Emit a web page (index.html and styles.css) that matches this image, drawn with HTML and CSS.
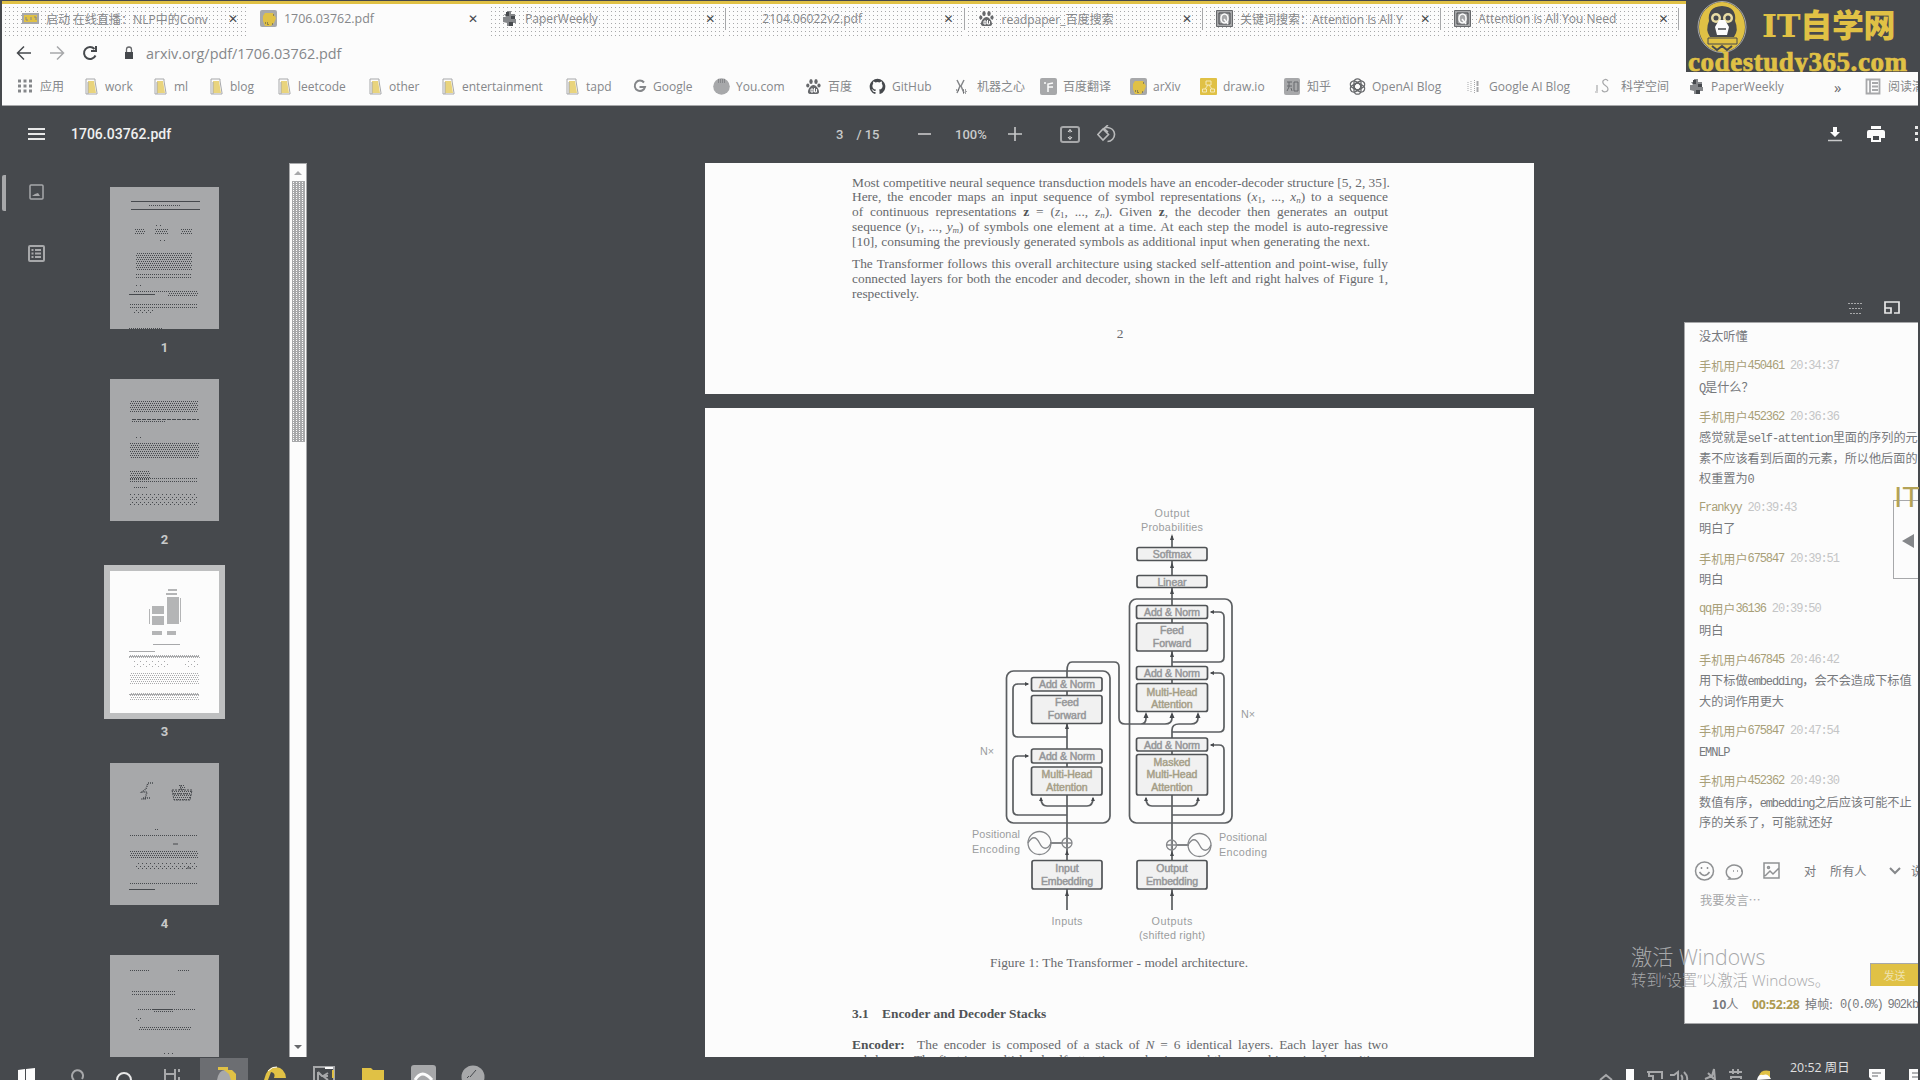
FILE: index.html
```html
<!DOCTYPE html>
<html lang="zh-CN">
<head>
<meta charset="utf-8">
<title>1706.03762.pdf</title>
<link rel="stylesheet" href="styles.css">
</head>
<body>
<svg class="defs" width="0" height="0">
  <defs>
    <pattern id="dense" width="4" height="4" patternUnits="userSpaceOnUse"><path class="dot" d="M0 0h1v1H0zM2 0h1v1H2zM1 2h1v1H1zM3 2h1v1H3z"/></pattern>
    <pattern id="loose" width="4" height="5" patternUnits="userSpaceOnUse"><path class="dot" d="M0 0h1v1H0zM2 3h1v1H2z"/></pattern>
    <pattern id="row" width="2" height="3" patternUnits="userSpaceOnUse"><path class="dot" d="M0 0h1v1H0z"/></pattern>
    <pattern id="speck" width="6" height="5" patternUnits="userSpaceOnUse"><path fill="#a7a8aa" d="M0 0h1v1H0zM3 3h1v1H3z"/></pattern>
    <marker id="arrow" viewBox="0 0 6 6" refX="4" refY="3" markerWidth="5" markerHeight="5" markerUnits="userSpaceOnUse" orient="auto"><path d="M0 .5 5.5 3 0 5.5z" fill="#46494d"/></marker>
    <symbol id="folder" viewBox="0 0 15 17"><path d="M2 16V1h9v2l2 12v1z" fill="#fcfcfc" stroke="#a7a8aa"/><path d="M4 3h6l2 12H4z" fill="#e9d47d"/><path d="M4 16V4" stroke="#a7a8aa"/></symbol>
    <symbol id="paw" viewBox="0 0 17 17"><g fill="#67696c"><ellipse cx="6" cy="3.5" rx="1.7" ry="2.5"/><ellipse cx="11" cy="3.5" rx="1.7" ry="2.5"/><ellipse cx="2.8" cy="7.5" rx="1.6" ry="2"/><ellipse cx="14" cy="7.5" rx="1.6" ry="2"/><path d="M8.5 7c3 0 6 5 5.5 7.500-.5 2-3 1.500-5.500 1.500s-5 .5-5.500-1.500C2.500 12 5.500 7 8.500 7z"/></g><path d="M6 11h2v3H6zM9.500 10v4h2v-3" fill="none" stroke="#fcfcfc"/></symbol>
    <symbol id="paper" viewBox="0 0 17 17"><path d="M6 1h4v3h4v4l-2 1h3v4h-3l-2 3H6v-3l-4-1V7h3L3 4h3z" fill="#85878a"/><path d="M5 2h3v4H5zM10 6h4v3h-4zM8 12h4v4H8z" fill="#46494d"/></symbol>
    <symbol id="reader" viewBox="0 0 17 17"><path d="M.5.5h16v16H.5z" fill="#a7a8aa" stroke="#67696c"/><path d="M3 3h11v11H3z" fill="none" stroke="#46494d"/><ellipse cx="8.500" cy="8.500" rx="3.500" ry="4.500" fill="none" stroke="#fcfcfc" stroke-width="1.500"/><path d="m8 9 4 5" stroke="#fcfcfc" stroke-width="1.500"/></symbol>
    <symbol id="arxiv" viewBox="0 0 17 17"><rect width="17" height="17" rx="2" fill="#a7a8aa"/><path d="M5 3h8l3 5-2 5-3 3H5l-2-5V6z" fill="#e0c145"/><path d="M5 13h3v2M13 5h2M12 14h2" stroke="#46494d" fill="none" stroke-dasharray="1 1"/></symbol>
  </defs>
</svg>

<div class="window">
  <header class="browser">
    <nav class="tabs">
      <div class="tab first"><svg class="fav" viewBox="0 0 17 17"><path d="M0 3h17v11H0z" fill="#a7a8aa"/><path d="M2 5h13v7H2z" fill="#e0c145"/><path d="M4 7v3h2m3-3v3m3-3h2v3" fill="none" stroke="#85878a"/></svg><span>启动 在线直播：NLP中的Conv</span><i>✕</i></div>
      <div class="tab active"><svg class="fav"><use href="#arxiv"/></svg><span>1706.03762.pdf</span><i>✕</i></div>
      <div class="tab"><svg class="fav"><use href="#paper"/></svg><span>PaperWeekly</span><i>✕</i></div>
      <div class="tab plain"><span>2104.06022v2.pdf</span><i>✕</i></div>
      <div class="tab"><svg class="fav"><use href="#paw"/></svg><span>readpaper_百度搜索</span><i>✕</i></div>
      <div class="tab"><svg class="fav"><use href="#reader"/></svg><span>关键词搜索：Attention Is All Y</span><i>✕</i></div>
      <div class="tab"><svg class="fav"><use href="#reader"/></svg><span>Attention is All You Need</span><i>✕</i></div>
    </nav>
    <div class="address">
      <svg width="16" height="16" viewBox="0 0 16 16" class="ink"><path d="M15 8H2m6-6.500L1.500 8 8 14.500"/></svg>
      <svg width="16" height="16" viewBox="0 0 16 16" class="soft"><path d="M1 8h13M8 1.500 14.500 8 8 14.500"/></svg>
      <svg width="16" height="16" viewBox="0 0 16 16" class="ink thick"><path d="M13.500 10.500A6 6 0 1 1 12.500 4M14 1v5H9"/></svg>
      <svg class="lock" width="10" height="14" viewBox="0 0 10 14"><path d="M1 6h8v7H1z" fill="#46494d"/><path d="M2.500 6V3.500a2.500 2.500 0 0 1 5 0V6" fill="none" stroke="#67696c" stroke-width="1.300"/></svg>
      <span>arxiv.org/pdf/1706.03762.pdf</span>
    </div>
    <nav class="bookmarks">
      <a class="wide"><svg viewBox="0 0 17 17"><path d="M1 3h14M1 8h14M1 13h14" stroke="#85878a" stroke-width="3" stroke-dasharray="3 2.500"/></svg>应用</a>
      <a><svg><use href="#folder"/></svg>work</a>
      <a><svg><use href="#folder"/></svg>ml</a>
      <a><svg><use href="#folder"/></svg>blog</a>
      <a><svg><use href="#folder"/></svg>leetcode</a>
      <a><svg><use href="#folder"/></svg>other</a>
      <a><svg><use href="#folder"/></svg>entertainment</a>
      <a><svg><use href="#folder"/></svg>tapd</a>
      <a><svg viewBox="0 0 15 17"><path d="M12 4.500a5.200 5.200 0 1 0 1 4.500H7.500" fill="none" stroke="#85878a" stroke-width="2"/></svg>Google</a>
      <a class="wide"><svg viewBox="0 0 17 17"><circle cx="8.500" cy="8.500" r="8.300" fill="#a7a8aa"/><path d="M5 2h8M5 4h8" stroke="#67696c" stroke-dasharray="1 1"/></svg>You.com</a>
      <a class="wide"><svg><use href="#paw"/></svg>百度</a>
      <a class="wide"><svg viewBox="0 0 17 17"><path fill="#46494d" d="M8.500.8A7.800 7.800 0 0 0 6 16c.4 0 .5-.2.500-.4V14c-2.200.5-2.700-1-2.700-1-.4-.9-.9-1.200-.9-1.200-.7-.5.1-.5.1-.5.800.1 1.200.8 1.200.8.700 1.200 1.900.9 2.300.7.100-.5.300-.9.500-1.100-1.700-.2-3.600-.9-3.600-3.900 0-.9.300-1.500.8-2.100-.1-.2-.3-1 .1-2.100 0 0 .7-.2 2.200.8a7.500 7.500 0 0 1 4 0c1.500-1 2.200-.8 2.200-.8.400 1.100.2 1.900.1 2.100.5.600.8 1.200.8 2.100 0 3-1.900 3.700-3.600 3.900.3.300.5.700.5 1.400v2.500c0 .2.100.5.500.4A7.800 7.800 0 0 0 8.500.8z"/></svg>GitHub</a>
      <a class="wide"><svg viewBox="0 0 17 17"><path d="m3 2 3 6-3 7M10 2 7 8l3 7" fill="none" stroke="#85878a" stroke-width="1.500"/><path d="M2 12h3m4 0h3v3H9" stroke="#46494d" stroke-dasharray="1 1" fill="none"/></svg>机器之心</a>
      <a class="wide"><svg viewBox="0 0 17 17"><rect width="17" height="17" rx="2" fill="#a7a8aa"/><path d="M8 14V6l5-1M4 5h2M8 9h5" stroke="#fcfcfc" stroke-width="1.500" fill="none"/></svg>百度翻译</a>
      <a class="wide"><svg><use href="#arxiv"/></svg>arXiv</a>
      <a class="wide"><svg viewBox="0 0 17 17"><rect width="17" height="17" rx="1" fill="#e0c145"/><path d="M6 3h5v4H6zM2.500 11h4v3h-4zM10.500 11h4v3h-4zM8 7l-3 4m4-4 3 4" fill="none" stroke="#f5e9b8" stroke-width="1"/></svg>draw.io</a>
      <a class="wide"><svg viewBox="0 0 17 17"><rect width="16" height="17" rx="2" fill="#a7a8aa"/><path d="M3 4h5M3 8h5M5 4v5l-2 4m4-3 1 3m2-9h4v9h-4z" fill="none" stroke="#67696c"/></svg>知乎</a>
      <a class="wide"><svg viewBox="0 0 17 17"><g fill="none" stroke="#67696c" stroke-width="1.300"><rect x="5" y=".8" width="7" height="11" rx="3.500"/><rect x="5" y=".8" width="7" height="11" rx="3.500" transform="rotate(60 8.500 8.500)"/><rect x="5" y=".8" width="7" height="11" rx="3.500" transform="rotate(120 8.500 8.500)"/><rect x="5" y=".8" width="7" height="11" rx="3.500" transform="rotate(180 8.500 8.500)"/><rect x="5" y=".8" width="7" height="11" rx="3.500" transform="rotate(240 8.500 8.500)"/><rect x="5" y=".8" width="7" height="11" rx="3.500" transform="rotate(300 8.500 8.500)"/></g></svg>OpenAI Blog</a>
      <a class="wide"><svg viewBox="0 0 17 17"><path d="M2 4v10M5 3v11M8.500 2v13" stroke="#a7a8aa" stroke-dasharray="1 1"/><path d="M11.500 3v12" stroke="#a7a8aa" stroke-width="2" stroke-dasharray="5 1"/></svg>Google AI Blog</a>
      <a class="wide extra"><svg viewBox="0 0 17 17"><path d="M14 3C12 0 8 2 9 5s5 3 5 6-5 4-6 1M3 7v6M1 14h3" fill="none" stroke="#a7a8aa" stroke-width="1.200"/></svg>科学空间</a>
      <a class="wide"><svg><use href="#paper"/></svg>PaperWeekly</a>
      <a class="more">»</a>
      <a class="wide"><svg viewBox="0 0 17 17"><path d="M1.500 1.500h13v14h-13zM5 2v13M7 5h6M7 8.500h6M7 12h6" fill="none" stroke="#a7a8aa" stroke-width="1.800"/></svg>阅读清单</a>
    </nav>
  </header>

  <div class="toolbar">
    <svg class="menu" width="17" height="14" viewBox="0 0 17 14"><path d="M0 2h17M0 7h17M0 12h17" stroke="#e8e8e8" stroke-width="2"/></svg>
    <b class="docname">1706.03762.pdf</b>
    <div class="pager"><span>3</span><span>/ 15</span></div>
    <svg class="minus" width="14" height="14" viewBox="0 0 14 14"><path d="M0 7h13" stroke="#c8c9ca" stroke-width="1.600"/></svg>
    <span class="zoom">100%</span>
    <svg class="plus" width="14" height="14" viewBox="0 0 14 14"><path d="M0 7h14M7 0v14" stroke="#c8c9ca" stroke-width="1.600"/></svg>
    <svg class="fit" width="20" height="17" viewBox="0 0 20 17"><rect x="1" y="1" width="18" height="15" rx="2" fill="none" stroke="#a7a8aa" stroke-width="2"/><path d="M10 3.500v3M10 10v3M8 6l2-2.500L12 6M8 11l2 2.500 2-2.500" fill="none" stroke="#dedede"/></svg>
    <svg class="rotate" width="19" height="18" viewBox="0 0 19 18"><path d="m6 4 5.500 5.500L6 15 .8 9.500zM6 4c4-3 11-1 11.500 5 .3 4-3 7.500-7 7.500M11 0 7 3.500 11 7" fill="none" stroke="#b9babb" stroke-width="1.600"/></svg>
    <svg class="download" width="14" height="16" viewBox="0 0 14 16"><path d="M5 1h4v5h3l-5 5-5-5h3z" fill="#fcfcfc"/><path d="M0 14.500h14" stroke="#c8c9ca" stroke-width="1.500"/></svg>
    <svg class="print" width="18" height="16" viewBox="0 0 18 16"><path d="M4 0h10v3H4zM2 4h14a2 2 0 0 1 2 2v6h-4v4H4v-4H0V6a2 2 0 0 1 2-2z" fill="#fcfcfc"/><path d="M6 10h6v4H6z" fill="#46494d"/></svg>
    <svg class="dots" width="4" height="16" viewBox="0 0 4 16"><path d="M1 0h3v3H1zM1 6h3v3H1zM1 12h3v3H1z" fill="#e8e8e8"/></svg>
  </div>

  <main class="viewer">
    <aside class="modes">
      <div class="mode current"><svg width="17" height="17" viewBox="0 0 17 17"><rect x="2" y="1" width="13" height="14" rx="1" fill="none" stroke="#a7a8aa" stroke-width="1.500"/><path d="m4 12 3-2 3-1 2 3z" fill="#a7a8aa"/></svg></div>
      <div class="mode"><svg width="17" height="17" viewBox="0 0 17 17"><rect x="1" y="1" width="15" height="15" rx="1" fill="none" stroke="#a7a8aa" stroke-width="2"/><path d="M3.500 5h2M3.500 8.500h2M3.500 12h2M7 5h6M7 8.500h6M7 12h6" stroke="#a7a8aa" stroke-width="1.800"/></svg></div>
    </aside>
    <section class="thumbs">
      <figure><svg class="page" viewBox="0 0 109 142"><path class="rule" d="M21 14.500h69M21 22.500h69"/><path fill="url(#dense)" d="M38 18h33v2H38zM25 42h10v5H25zM45 42h13v5H45zM71 42h11v5H71zM23 103h35v3H23zM58 103h30v7H58z"/><path fill="url(#loose)" d="M46 36h7v3H46zM48 52h9v2h-9zM24 98h10v2H24zM24 120h20v6H24z"/><path fill="url(#dense)" d="M26 66h56v18H26z"/><path fill="url(#row)" d="M26 85h56v7H26zM20 116h68v5H20z"/><path class="rule" d="M19 107.500h26"/><path class="rule" d="M19 141.500h34" stroke-dasharray="1 1"/></svg><figcaption>1</figcaption></figure>
      <figure><svg class="page" viewBox="0 0 109 142"><path fill="url(#row)" d="M43 14h43v1H43z"/><path fill="url(#dense)" d="M20 21h68v13H20zM20 91h20v10H20z"/><path class="rule" d="M22 40.500h40M62 40.500h27" stroke-dasharray="4 1"/><path fill="url(#loose)" d="M20 115h68v11H20zM24 58h8v1h-8z"/><path fill="url(#dense)" d="M20 64h69v15H20z"/><path fill="url(#row)" d="M22 42h33v2H22zM20 91h68v2H20zM20 97h68v6H20zM24 108h13v1H24z"/></svg><figcaption>2</figcaption></figure>
      <figure class="selected"><svg class="page" viewBox="0 0 109 142"><g fill="#b4b5b6"><path d="M58 18h9v2h-9zM56 22h11v2H56zM57 26h12v27H57zM42 35h12v8H42zM42 45h12v9H42zM42 60h10v4H42zM57 60h9v4h-9zM39 38h1v15h-1zM70 27h1v24h-1z"/></g><g class="faint" fill="url(#dense)"><path d="M19 84h71v4H19zM20 101h69v13H20zM20 122h69v7H20z"/></g><path d="M43 73.500h27M19 80.500h26M19 85.500h70M19 123.500h70" stroke="#a7a8aa"/><path fill="url(#speck)" d="M22 90h36v6H22zM75 90h14v6H75z"/></svg><figcaption>3</figcaption></figure>
      <figure><svg class="page" viewBox="0 0 109 142"><path fill="url(#row)" d="M66 14h11v1H66z"/><path class="rule" fill="none" d="M43 20h-5l-2 6-4 3h5l-2 7h-4m2-1h7" stroke-width="1.500" stroke-dasharray="1 1"/><path fill="url(#dense)" d="M62 27h20l-2 11H64zM69 22h6v5h-6z"/><path class="rule" fill="none" d="M62 27h20l-2 10H64zM64 31h16M71 22v5" stroke-dasharray="2 1"/><path fill="url(#row)" d="M24 52h12v1H24zM27 59h18v1H27zM19 71h69v4H19zM24 109h15v1H24zM19 119h68v3H19zM46 127h42v1H46z"/><path fill="url(#dense)" d="M20 88h68v8H20zM45 65h4v2h-4z"/><path class="rule" d="M63 81h5M77 105h4"/><path fill="url(#loose)" d="M26 100h62v6H26z"/><path class="rule" d="M19 126.500h26"/></svg><figcaption>4</figcaption></figure>
      <figure><svg class="page" viewBox="0 0 109 142"><path fill="url(#row)" d="M20 15h20v1H20zM67 15h13v1H67zM22 36h43v4H22zM40 38h46v1H40zM22 44h32v1H22zM27 54h58v3H27zM25 82h16v1H25zM22 86h68v1H22z"/><path fill="url(#dense)" d="M29 71h52v5H29zM43 54h20v3H43z"/><path fill="url(#loose)" d="M26 62h5v5h-5zM54 96h9v4h-9z"/></svg></figure>
    </section>
    <div class="scroll"><svg width="18" height="17" viewBox="0 0 18 17"><path d="m9 7 4 4H5z" fill="#a7a8aa"/></svg><div class="grip"></div><svg class="down" width="18" height="17" viewBox="0 0 18 17"><path d="M5 5h8L9 9z" fill="#67696c"/></svg></div>
    <article class="document">
      <section class="sheet upper">
        <div class="para">
          <p>Most competitive neural sequence transduction models have an encoder-decoder structure [5, 2, 35].</p>
          <p>Here, the encoder maps an input sequence of symbol representations (<em>x</em><sub>1</sub>, ..., <em>x<sub>n</sub></em>) to a sequence</p>
          <p>of continuous representations <b>z</b> = (<em>z</em><sub>1</sub>, ..., <em>z<sub>n</sub></em>). Given <b>z</b>, the decoder then generates an output</p>
          <p>sequence (<em>y</em><sub>1</sub>, ..., <em>y<sub>m</sub></em>) of symbols one element at a time. At each step the model is auto-regressive</p>
          <p class="ragged fifth">[10], consuming the previously generated symbols as additional input when generating the next.</p>
        </div>
        <div class="para">
          <p>The Transformer follows this overall architecture using stacked self-attention and point-wise, fully</p>
          <p>connected layers for both the encoder and decoder, shown in the left and right halves of Figure 1,</p>
          <p class="ragged">respectively.</p>
        </div>
        <div class="folio">2</div>
      </section>
      <section class="sheet lower">
        <svg class="model" width="340" height="450" viewBox="960 500 340 450">
          <g class="wire">
            <rect x="1006.500" y="671" width="103.500" height="152" rx="7"/><rect x="1129.500" y="599" width="102.500" height="224" rx="7"/>
            <path d="M1067 910V889M1067 860V671q0-9 5-9h42q5 0 5 5v51q0 6 6 6h16q5 0 5-6v-4M1125 724h40q7 0 7-6v-4M1172 910V889M1172 860V730q0-6 7-6h12q7 0 7-6v-4M1172 683v-64M1172 606v-70"/>
            <path d="M1067 737h-49q-5 0-5-5v-43q0-5 5-5h10" marker-end="url(#arrow)"/>
            <path d="M1067 815h-49q-5 0-5-5v-49q0-5 5-5h10" marker-end="url(#arrow)"/>
            <path d="M1172 662h47q5 0 5-5v-40q0-5-5-5h-8" marker-end="url(#arrow)"/>
            <path d="M1172 732h47q5 0 5-5v-49q0-5-5-5h-8" marker-end="url(#arrow)"/>
            <path d="M1172 815h47q5 0 5-5v-60q0-5-5-5h-8" marker-end="url(#arrow)"/>
            <path d="M1067 806h-20q-6 0-6-8" marker-end="url(#arrow)"/><path d="M1067 806h20q6 0 6-8" marker-end="url(#arrow)"/>
            <path d="M1172 806h-20q-6 0-6-8" marker-end="url(#arrow)"/><path d="M1172 806h20q6 0 6-8" marker-end="url(#arrow)"/>
            <path d="M1050 843h12M1177 845h12"/>
          </g>
          <g fill="#46494d"><path d="M1067 890l2 6h-4zM1172 890l2 6h-4zM1172 534l2 6h-4zM1172 562l2 6h-4zM1172 588l2 6h-4zM1067 723l2 6h-4zM1172 651l2 6h-4zM1146 712l2.500 6h-5zM1172 712l2.500 6h-5zM1198 712l2.500 6h-5zM1067 850l2 5h-4zM1172 851l2 5h-4z"/></g>
          <g class="box">
            <rect x="1137" y="547.500" width="70" height="13" rx="2"/><rect x="1137" y="575.500" width="70" height="12" rx="2"/><rect x="1136.500" y="605.500" width="71" height="13" rx="2"/><rect x="1136.500" y="623" width="71" height="28" rx="2"/><rect x="1136.500" y="666.500" width="71" height="13" rx="2"/><rect x="1136.500" y="683.500" width="71" height="28" rx="2"/><rect x="1136.500" y="738" width="71" height="13" rx="2"/><rect x="1136.500" y="754.500" width="71" height="40.500" rx="2"/><rect x="1137" y="860.500" width="70" height="28.500" rx="2"/>
            <rect x="1031.500" y="677.500" width="70.500" height="13.500" rx="2"/><rect x="1031.500" y="695.500" width="70.500" height="28" rx="2"/><rect x="1031.500" y="749" width="70.500" height="14" rx="2"/><rect x="1031.500" y="767" width="70.500" height="28" rx="2"/><rect x="1032" y="860.500" width="70" height="28.500" rx="2"/>
          </g>
          <g class="node"><circle cx="1067" cy="843" r="5"/><path d="M1062 843h10M1067 838v10"/><circle cx="1039.500" cy="843" r="11.500"/><path d="M1028 843c4-7 8-7 11.500 0s8 7 11.500 0"/><circle cx="1171.500" cy="845" r="5"/><path d="M1166.500 845h10M1171.500 840v10"/><circle cx="1199.500" cy="845" r="11.500"/><path d="M1188 845c4-7 8-7 11.500 0s8 7 11.500 0"/></g>
          <g class="inside">
            <text x="1172" y="558">Softmax</text><text x="1172" y="585.500">Linear</text><text x="1172" y="616" textLength="56">Add &amp; Norm</text><text x="1172" y="634">Feed</text><text x="1172" y="646.500">Forward</text><text x="1172" y="677" textLength="56">Add &amp; Norm</text><text class="warm" x="1172" y="695.500">Multi-Head</text><text class="warm" x="1172" y="708">Attention</text><text x="1172" y="748.500" textLength="56">Add &amp; Norm</text><text class="warm" x="1172" y="766">Masked</text><text class="warm" x="1172" y="778">Multi-Head</text><text class="warm" x="1172" y="790.500">Attention</text><text x="1172" y="872">Output</text><text x="1172" y="884.500" textLength="52">Embedding</text>
            <text x="1067" y="688" textLength="56">Add &amp; Norm</text><text x="1067" y="706">Feed</text><text x="1067" y="718.500">Forward</text><text x="1067" y="760" textLength="56">Add &amp; Norm</text><text class="warm" x="1067" y="778">Multi-Head</text><text class="warm" x="1067" y="790.500">Attention</text><text x="1067" y="872">Input</text><text x="1067" y="884.500" textLength="52">Embedding</text>
          </g>
          <g class="label">
            <text x="1172" y="517" textLength="35">Output</text><text x="1172" y="531" textLength="62">Probabilities</text><text x="987" y="755">N×</text><text x="1248" y="718">N×</text><text x="996" y="838" textLength="48">Positional</text><text x="996" y="853" textLength="48">Encoding</text><text x="1243" y="841" textLength="48">Positional</text><text x="1243" y="856" textLength="48">Encoding</text><text x="1067" y="925" textLength="31">Inputs</text><text x="1172" y="925" textLength="41">Outputs</text><text x="1172" y="939" textLength="66">(shifted right)</text>
          </g>
        </svg>
        <div class="caption">Figure 1: The Transformer - model architecture.</div>
        <h3><span>3.1</span>Encoder and Decoder Stacks</h3>
        <p><b>Encoder:</b>&ensp; The encoder is composed of a stack of <em>N</em> = 6 identical layers. Each layer has two</p>
        <p>sub-layers. The first is a multi-head self-attention mechanism, and the second is a simple, position-</p>
      </section>
    </article>
  </main>

  <footer class="taskbar">
    <svg class="apps" width="500" height="23" viewBox="0 1057 500 23">
      <path d="M200 1058h48v22h-48z" fill="#6c6e72"/>
      <path d="m18 1070 7-1v11h-7zM26 1069l9-1v12h-9z" fill="#fcfcfc"/>
      <g fill="none" stroke="#a7a8aa" stroke-width="2"><path d="M74 1080a5.500 5.500 0 1 1 8-1"/><path d="M117 1080a7 7 0 0 1 14 0" stroke="#e8e8e8"/><path d="M165 1069v11M175 1069v11M165 1074h10M179 1069v3M179 1077v3"/></g>
      <path d="M217 1080q2-11 9-10 9 2 10 10z" fill="#a7a8aa"/><path d="M218 1067h10v3h4l4 4v6h-5l-2-6-5-4h-6z" fill="#e0c145"/>
      <path d="M264 1080q3-14 12-13 9 1 10 11h-12q2-5-3-6l-3 8z" fill="#e0c145"/><path d="M268 1071q5-5 9-4" stroke="#fcfcfc" fill="none"/>
      <path d="M314 1080v-13h20v13M318 1072v8m0-8l4 4h6m0-3-5 3 5 4" fill="none" stroke="#a7a8aa" stroke-width="2"/><path d="M325 1067h8v2h-8z" fill="#fcfcfc"/><path d="M332 1070h2v8h-2z" fill="#e0c145"/>
      <path d="M362 1068h9l2 2h11v10h-22z" fill="#e0c145"/>
      <rect x="411" y="1065" width="25" height="20" rx="3" fill="#a7a8aa"/><path d="M415 1080q7-12 17 0" stroke="#fcfcfc" stroke-width="3" fill="none"/>
      <circle cx="473" cy="1077" r="11.500" fill="#a7a8aa"/><path d="m467 1078 2-2m1 1 6-7" stroke="#46494d"/>
    </svg>
    <svg class="tray" width="180" height="23" viewBox="1596 1057 180 23">
      <g fill="none" stroke="#a7a8aa" stroke-width="2"><path d="m1600 1080 6-5 6 5M1647 1072h15v7M1649 1072v4h4v4M1670 1075h4l4-3v8M1681 1075q2 2 1 5M1684 1072q4 4 3 8M1705 1079l7-3 2-7 1 11M1708 1073l6 6M1729 1072h13M1731 1079v-2h10v2M1733 1069v5M1738 1069v5"/></g><path d="M1626 1069h8v11h-8z" fill="#fcfcfc"/><path d="M1759 1076q2-7 11-5v7z" fill="#e0c145"/><path d="M1757 1080q1-6 6-5 5-2 8 4z" fill="#fcfcfc"/>
    </svg>
    <time>20:52 周日</time>
    <svg class="notes" width="50" height="23" viewBox="1868 1057 50 23"><path d="M1869 1069h16v11h-13l-3-3zM1909 1069h9v11h-9z" fill="#fcfcfc"/><path d="M1872 1073h9M1872 1076h6M1912 1073h6M1912 1077h6" stroke="#67696c"/></svg>
  </footer>
</div>

<div class="brand">
  <svg width="52" height="54" viewBox="0 0 52 54"><ellipse cx="26" cy="27" rx="24" ry="25.500" fill="#46494d" stroke="#a7a8aa" stroke-width="1"/><ellipse cx="26" cy="27" rx="23" ry="25" fill="#e0c145"/><path d="M14 37q-5-7-1-16-2-14 13-15 15 1 13 15 4 9-1 16z" fill="#46494d"/><circle cx="20" cy="18" r="5" fill="#e8dca4"/><circle cx="32" cy="18" r="5" fill="#e8dca4"/><circle cx="20" cy="18" r="2.500" fill="#46494d"/><circle cx="32" cy="18" r="2.500" fill="#46494d"/><path d="M23 20h6l4 7-2 8H21l-2-8z" fill="#fcfcfc"/><path d="M22 29h8" stroke="#46494d" stroke-width="1.500"/><path d="M12 38h29v6H12z" fill="#e0c145" stroke="#46494d"/><path d="m16 46 5 4 5-4 5 4 5-4" stroke="#46494d" stroke-width="2" fill="none"/></svg>
  <strong>IT自学网</strong>
  <b>codestudy365.com</b>
</div>

<svg class="float-tools" width="56" height="16" viewBox="0 0 56 16"><path d="M1 3.500h14M2 8.500h13M3 13.500h12" stroke="#a7a8aa" stroke-dasharray="2 1"/><path d="M38 11V2h14v11h-5M38 13V8h6v5z" fill="none" stroke="#e8e8e8" stroke-width="1.700"/></svg>

<section class="chat">
  <div class="feed">
    <div class="msg"><p>没太听懂</p></div>
    <div class="msg"><h4>手机用户<tt>450461</tt><time>20:34:37</time></h4><p><tt>Q</tt>是什么？</p></div>
    <div class="msg"><h4>手机用户<tt>452362</tt><time>20:36:36</time></h4><p>感觉就是<tt>self-attention</tt>里面的序列的元</p><p>素不应该看到后面的元素，所以他后面的</p><p>权重置为<tt>0</tt></p></div>
    <div class="msg"><h4><tt>Frankyy</tt><time>20:39:43</time></h4><p>明白了</p></div>
    <div class="msg"><h4>手机用户<tt>675847</tt><time>20:39:51</time></h4><p>明白</p></div>
    <div class="msg"><h4><tt>qq</tt>用户<tt>36136</tt><time>20:39:50</time></h4><p>明白</p></div>
    <div class="msg"><h4>手机用户<tt>467845</tt><time>20:46:42</time></h4><p>用下标做<tt>embedding</tt>，会不会造成下标值</p><p>大的词作用更大</p></div>
    <div class="msg"><h4>手机用户<tt>675847</tt><time>20:47:54</time></h4><p><tt>EMNLP</tt></p></div>
    <div class="msg"><h4>手机用户<tt>452362</tt><time>20:49:30</time></h4><p>数值有序，<tt>embedding</tt>之后应该可能不止</p><p>序的关系了，可能就还好</p></div>
  </div>
  <div class="compose">
    <svg width="90" height="22" viewBox="0 0 90 22" fill="none" stroke="#8f9193" stroke-width="1.500"><circle cx="10.500" cy="11" r="9"/><path d="M5.500 12q5 7 10 0M7.500 7v2M13.500 7v2M36 18a8 7 0 1 1 3 1h-4zM39 11h1M43 11h1M47 11h1M70 3h15v15H70zM71 16l5-5 3 3 6-6"/><circle cx="74.500" cy="7.500" r="1"/></svg>
    <span class="to">对</span><span class="all">所有人</span>
    <svg class="chev" width="12" height="8" viewBox="0 0 12 8"><path d="m1 1 5 5 5-5" fill="none" stroke="#85878a" stroke-width="2"/></svg>
    <span>说</span>
  </div>
  <div class="hint">我要发言…</div>
  <button>发送</button>
  <div class="status"><span class="count"><b>10</b>人</span><b class="clock">00:52:28</b><span class="loss">掉帧:</span><tt>0(0.0%)</tt><tt class="rate">902kb</tt></div>
</section>

<div class="handle"><b>IT</b><svg width="25" height="79" viewBox="0 0 25 79"><path d="m8 40 12-7v14z" fill="#85878a"/></svg></div>

<div class="activate"><p>激活 Windows</p><small>转到“设置”以激活 Windows。</small></div>
</body>
</html>
```
FILE: styles.css
```css
* { box-sizing: border-box; margin: 0; padding: 0; }
body { width: 1920px; height: 1080px; overflow: hidden; background: #46494d; color: #85878a; font: 13px "Open Sans", "Noto Sans CJK SC", sans-serif; position: relative; }
.defs { position: absolute; }
.dot { fill: #46494d; }
.window { height: 1080px; padding: 1px 2px 0; display: flex; flex-direction: column; }

/* browser chrome */
.browser { height: 105px; background: #fcfcfc; border-top: 3px solid #e0c145; border-bottom: 1px solid #a7a8aa; flex: none; }
.tabs { height: 32px; display: flex; padding-left: 0; overflow: hidden; }
.tab { width: 238.300px; flex: none; display: flex; align-items: center; padding: 0 10px 3px 13px; border-right: 1px solid #a7a8aa; border-image: linear-gradient(transparent 5px, #a7a8aa 5px 25px, transparent 25px) 1; background: conic-gradient(#a7a8aa 0 25%, transparent 0) -1px 1px / 2px 2px; background: linear-gradient(90deg, #fcfcfc 3px, transparent 3px) 0 0 / 4px 4px, linear-gradient(#fcfcfc 3px, #a7a8aa 3px) 0 0 / 4px 4px; font-size: 12px; }
.tab.first { width: 246px; padding-left: 20px; border: 0; }
.tab.active { width: 240px; background: none; border: 0; font-size: 12.450px; padding-left: 12px; }
.tab.plain { padding-left: 36px; }
.fav { width: 17px; height: 17px; margin-right: 7px; flex: none; }
.tab span { flex: 1; white-space: nowrap; overflow: hidden; }
.tab i { font: bold 12px "DejaVu Sans", sans-serif; color: #46494d; width: 10px; margin-left: 4px; }
.address { height: 34px; display: flex; align-items: center; padding-left: 14px; gap: 17px; font-size: 14.400px; }
.address svg { fill: none; stroke-width: 1.500; flex: none; }
.address .ink { stroke: #46494d; }
.address .soft { stroke: #a7a8aa; }
.address .thick { stroke-width: 2; }
.address .lock { margin: 0 -5px 0 9px; }
.bookmarks { height: 33px; padding-left: 15px; display: grid; grid-template-columns: 67px 69px 56px 68px 91px 73px 124px 67px 81px 92px 64px 85px 86px 90px 70px 84px 65px 117px 128px 94px 146px 31px 60px; align-items: center; overflow: hidden; font-size: 12px; line-height: 18px; }
.bookmarks a { display: flex; align-items: center; gap: 6px; white-space: nowrap; }
.bookmarks svg { width: 15px; height: 17px; flex: none; }
.bookmarks .wide svg { width: 17px; }
.bookmarks .extra svg { margin-right: 4px; }
.bookmarks .more { font-size: 15px; color: #67696c; }

/* viewer toolbar */
.toolbar { height: 57px; flex: none; display: flex; align-items: center; color: #c8c9ca; padding: 0 0 1px 26px; font-size: 12px; }
.toolbar > * { flex: none; }
.docname { width: 765px; margin-left: 26px; font: 500 14px Roboto, sans-serif; color: #f0f0f0; }
.pager { width: 82px; display: flex; gap: 13px; font: 500 13px Roboto, sans-serif; }
.zoom { width: 53px; margin-left: 23px; font: 500 13px Roboto, sans-serif; }
.fit { margin-left: 38px; }
.rotate { margin-left: 17px; }
.download { margin-left: 712px; }
.print { margin-left: 25px; }
.dots { margin-left: 29px; }

.viewer { height: 894px; flex: none; display: flex; overflow: hidden; }
.modes { width: 102px; padding-top: 12px; display: flex; flex-direction: column; gap: 25px; }
.mode { height: 36px; padding: 9px 0 0 26px; }
.mode.current { border-left: 4px solid #a7a8aa; border-radius: 2px; padding-left: 22px; }
.thumbs { width: 185px; padding: 24px 0 0 6px; }
.thumbs figure { height: 192px; }
.page { display: block; width: 109px; height: 142px; background: #a7a8aa; }
.page .rule { stroke: #46494d; }
.page .faint { opacity: .45; }
.selected .page { background: #fcfcfc; outline: 6px solid #bebfc0; }
.thumbs figcaption { width: 109px; margin-top: 10px; text-align: center; font: bold 13px/17px Roboto, sans-serif; color: #c8c9ca; }
.scroll { width: 18px; background: #fcfcfc; border: 1px solid #a7a8aa; border-width: 1px 1px 0; display: flex; flex-direction: column; align-items: center; }
.scroll svg { flex: none; }
.grip { width: 13px; height: 261px; background: radial-gradient(circle at .5px .5px, #fcfcfc .6px, transparent .8px) 1px 1px / 3px 2px #a7a8aa; }
.down { margin-top: auto; }

/* paper */
.document { margin-left: 398px; width: 829px; }
.sheet { background: #fcfcfc; padding: 0 146px 0 147px; font: 13.400px/14.800px "Liberation Serif", serif; color: #67696c; overflow: hidden; }
.sheet p { height: 14.800px; text-align: justify; text-align-last: justify; white-space: nowrap; }
.sheet p.ragged { text-align-last: left; }
.sheet p.fifth { width: 518px; text-align-last: justify; }
.sheet sub { font-size: 9px; line-height: 0; vertical-align: -2px; }
.upper { height: 231px; padding-top: 12.500px; margin-bottom: 14px; }
.para { margin-bottom: 7.500px; }
.folio { text-align: center; padding-top: 18.500px; }
.lower { height: 649px; display: flex; flex-direction: column; }
.model { margin: 92px 0 0 108px; flex: none; font-family: "Liberation Sans", sans-serif; }
.wire { fill: none; stroke: #5b5e61; stroke-width: 1.700; }
.box { fill: #f1f1f1; stroke: #505356; stroke-width: 1.700; }
.node { fill: none; stroke: #85878a; stroke-width: 1.300; }
.inside { font-size: 10.500px; fill: #8b8d8f; text-anchor: middle; stroke: #9b9c9e; stroke-width: .5; }
.inside .warm { fill: #9d977f; stroke: #aaa48d; }
.label { font-size: 10.800px; fill: #9b9c9e; text-anchor: middle; }
.caption { margin: 6px 0 0 138px; width: 258px; text-align-last: justify; white-space: nowrap; }
.sheet h3 { font-size: 13.400px; line-height: 15px; margin: 35px 0 17px; white-space: nowrap; color: #505356; }
.sheet h3 span { display: inline-block; width: 30px; }
.lower p { flex: none; }
.sheet b { color: #505356; }

.taskbar { height: 23px; display: flex; margin: 0 0 0 -2px; overflow: hidden; flex: none; }
.taskbar svg { flex: none; }
.tray { margin-left: 1096px; }
.taskbar time { width: 92px; padding: 0 0 0 14px; font-size: 12.400px; line-height: 21px; color: #e0e0e0; white-space: nowrap; }

/* floating overlays */
.brand { position: absolute; left: 1686px; top: 0; width: 232px; height: 72px; background: #46494d; color: #e0c145; display: grid; grid-template-columns: 76px 1fr; grid-template-rows: 50px 22px; overflow: hidden; }
.brand svg { margin-left: 10px; }
.brand strong { font: 900 32px/52px "DejaVu Serif", "Noto Sans CJK SC", serif; white-space: nowrap; letter-spacing: -.3px; }
.brand b { grid-column: 1 / 3; font: bold 27px/24px "Liberation Serif", serif; letter-spacing: .55px; -webkit-text-stroke: .7px #e0c145; padding-left: 2px; white-space: nowrap; }
.float-tools { position: absolute; left: 1847px; top: 300px; }
.chat { position: absolute; left: 1684px; top: 322px; width: 234px; height: 702px; background: #fcfcfc; border: 1px solid #a7a8aa; border-right: 0; overflow: hidden; font: 12.150px/20.350px "Noto Sans CJK SC", sans-serif; color: #77797c; display: flex; flex-direction: column; }
.feed { height: 529px; padding: 3px 0 0 14px; flex: none; white-space: nowrap; }
.msg { margin-bottom: 9.900px; }
.msg p, .msg h4 { height: 20.350px; line-height: 20.350px; }
.msg h4 { font-weight: 400; color: #a89f78; display: flex; }
.chat tt { font: 12px/20px "Liberation Mono", monospace; letter-spacing: -1.120px; }
.msg time { color: #c4c5c6; font: 12px/20px "Liberation Mono", monospace; letter-spacing: -1.120px; margin-left: 6px; }
.compose { height: 38px; display: flex; align-items: center; padding-left: 9px; flex: none; }
.compose svg, .compose span { flex: none; }
.to { width: 26px; margin-left: 20px; }
.all { width: 59px; }
.chev { margin-right: 10px; }
.hint { height: 73px; padding: 0 0 0 15px; flex: none; color: #a7a8aa; }
.chat button { width: 48px; height: 23px; align-self: flex-end; flex: none; border: 1px solid #a7a8aa; border-width: 1px 0 0 1px; background: #e0c145; color: #efe3b0; font: 11px "Noto Sans CJK SC", sans-serif; }
.status { height: 37px; display: flex; align-items: center; padding-left: 27px; flex: none; white-space: nowrap; }
.status span, .status tt { flex: none; }
.count { width: 40px; }
.clock { width: 59px; color: #ad9a52; font: bold 12.300px "Open Sans", sans-serif; letter-spacing: -.2px; }
.loss { width: 35px; }
.rate { margin-left: 5px; }
.handle { position: absolute; left: 1893px; top: 500px; width: 25px; height: 79px; border: 1px solid #a7a8aa; border-right: 0; overflow: visible; }
.handle b { position: absolute; left: 0; top: -18px; width: 25px; overflow: hidden; font: 30px/28px "Liberation Sans", sans-serif; color: #b3a256; white-space: nowrap; }
.handle svg { display: block; }
.activate { position: absolute; left: 1631px; top: 942px; color: #a7a8aa; white-space: nowrap; }
.activate p { font: 300 21.200px/30px "Open Sans", "Noto Sans CJK SC", sans-serif; }
.activate small { display: block; font: 300 15.400px/17px "Open Sans", "Noto Sans CJK SC", sans-serif; }
```
